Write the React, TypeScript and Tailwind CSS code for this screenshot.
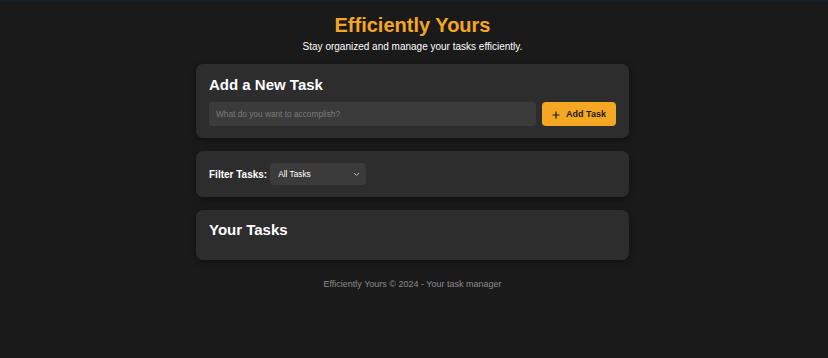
import React from "react";

export default function App() {
  return (
    <div
      className="min-h-[358px] w-full bg-[#1a1a1a] border-t border-[#0d2238] pr-[3px] text-white"
      style={{ fontFamily: '"Liberation Sans", Arial, sans-serif' }}
    >
      <header className="flex flex-col items-center pt-[12px]">
        <h1 className="text-[20px] leading-[25px] font-bold text-[#f5a623]">Efficiently Yours</h1>
        <p className="mt-[2px] text-[10px] leading-[13px] text-white">
          Stay organized and manage your tasks efficiently.
        </p>
      </header>

      <main className="mx-auto mt-[11px] flex w-[433px] flex-col gap-[13px]">
        <section className="rounded-[7px] bg-[#2d2d2d] px-[13px] pt-[11px] pb-[12px] shadow-[0_2px_6px_rgba(0,0,0,0.4)]">
          <h2 className="text-[15px] leading-[19px] font-bold text-white">Add a New Task</h2>
          <div className="mt-[8px] flex gap-[6px]">
            <input
              className="h-[24px] flex-1 rounded-[3px] bg-[#3b3b3b] px-[7px] text-[8.3px] text-white placeholder:text-[#7a7a7a] outline-none"
              placeholder="What do you want to accomplish?"
            />
            <button className="flex h-[24px] w-[74px] items-center justify-center gap-[6px] rounded-[4px] bg-[#f5a623] pt-[1px] text-[9px] font-bold text-[#1c1c1c]">
              <svg width="8" height="8" viewBox="0 0 8 8">
                <path d="M4 0.5V7.5M0.5 4H7.5" stroke="#1c1c1c" strokeWidth="1.2" />
              </svg>
              Add Task
            </button>
          </div>
        </section>

        <section className="flex items-center gap-[3px] rounded-[7px] bg-[#2d2d2d] px-[13px] py-[12px] shadow-[0_2px_6px_rgba(0,0,0,0.4)]">
          <span className="text-[10px] font-bold text-white">Filter Tasks:</span>
          <div className="flex h-[22px] w-[96px] items-center justify-between rounded-[4px] bg-[#3b3b3b] pl-[8px] pr-[6px]">
            <span className="text-[8.3px] text-white">All Tasks</span>
            <svg width="7" height="5" viewBox="0 0 7 5">
              <path d="M1 1L3.5 3.5L6 1" stroke="#bbbbbb" strokeWidth="1" fill="none" />
            </svg>
          </div>
        </section>

        <section className="rounded-[7px] bg-[#2d2d2d] px-[13px] pt-[10px] pb-[21px] shadow-[0_2px_6px_rgba(0,0,0,0.4)]">
          <h2 className="text-[15px] leading-[19px] font-bold text-white">Your Tasks</h2>
        </section>
      </main>

      <footer className="mt-[19px] text-center text-[9px] leading-[11px] text-[#8a8a8a]">
        Efficiently Yours © 2024 - Your task manager
      </footer>
    </div>
  );
}
